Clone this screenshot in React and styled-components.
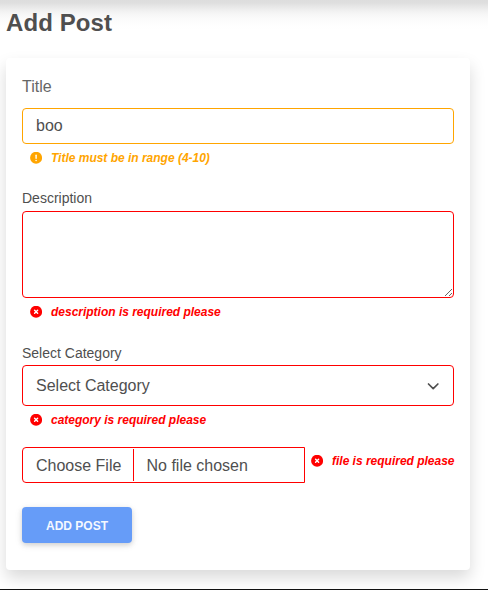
import React from "react";
import styled, { createGlobalStyle } from "styled-components";

const GlobalStyle = createGlobalStyle`
  *, *::before, *::after { box-sizing: border-box; }
  body {
    margin: 0;
    background: #fff;
    color: #4f4f4f;
    font-family: "Liberation Sans", Arial, sans-serif;
    font-size: 16px;
    line-height: 1.6;
    overflow: hidden;
  }
`;

const Page = styled.div`
  height: 590px;
  padding: 0 18px 0 6px;
  border-bottom: 1px solid #111;
  background: linear-gradient(
    #dddddd 0, #dfdfdf 3px, #e6e6e6 6px, #efefef 10px,
    #f6f6f6 14px, #fbfbfb 19px, #fefefe 25px, #fff 30px
  );
  overflow: hidden;
`;

const Heading = styled.h1`
  margin: 0;
  height: 58px;
  padding-top: 8px;
  font-size: 24px;
  font-weight: 700;
  line-height: 29px;
  letter-spacing: 0.1px;
`;

const Card = styled.form`
  height: 512px;
  padding: 16px;
  border-radius: 4px;
  background: #fff;
  box-shadow: 0 8px 16px rgba(0, 0, 0, 0.15);
`;

const Field = styled.div`
  display: flex;
  flex-direction: column;
  height: ${({ $height }) => $height}px;
`;

const Label = styled.label`
  flex: none;
  height: ${({ $height }) => $height}px;
  font-size: ${({ $large }) => ($large ? 16 : 14)}px;
  line-height: ${({ $line }) => $line}px;
  color: ${({ $large }) => ($large ? "#666" : "#4f4f4f")};
`;

const TextInput = styled.input`
  display: block;
  width: 100%;
  height: 36px;
  padding: 0 13px;
  border: 1px solid orange;
  border-radius: 4px;
  outline: 0;
  color: #4f4f4f;
  font: 16px "Liberation Sans", Arial, sans-serif;
`;

const TextArea = styled.textarea`
  display: block;
  width: 100%;
  height: 87px;
  padding: 5px 12px;
  border: 1px solid #f00;
  border-radius: 4px;
  outline: 0;
  color: #4f4f4f;
  font: 16px "Liberation Sans", Arial, sans-serif;
`;

const SelectBox = styled.div`
  display: flex;
  align-items: center;
  justify-content: space-between;
  flex: none;
  height: 41px;
  padding: 0 12px 0 13px;
  border: 1px solid #f00;
  border-radius: 4px;
`;

const Message = styled.div`
  display: flex;
  align-items: center;
  flex: none;
  gap: 9px;
  height: 16px;
  margin: ${({ $inline }) => ($inline ? "6px 0 0 6px" : "6px 0 0 8px")};
  color: ${({ $color }) => $color};
  font-size: 12px;
  font-weight: 700;
  font-style: italic;
  line-height: 16px;
  letter-spacing: -0.01px;
  white-space: nowrap;
`;

const StatusIcon = styled.svg`
  flex: none;
  width: 12px;
  height: 12px;
`;

const FileRow = styled.div`
  display: flex;
  height: 60px;
`;

const FilePicker = styled.div`
  display: flex;
  align-items: center;
  flex: none;
  width: 283px;
  height: 36px;
  border: 1px solid #f00;
  border-radius: 4px 0 0 4px;
`;

const FileButton = styled.span`
  width: 111px;
  height: 32px;
  padding-left: 13px;
  border-right: 1px solid #f00;
  line-height: 33px;
`;

const FileName = styled.span`
  padding-left: 12.5px;
  line-height: 33px;
`;

const SubmitButton = styled.button`
  display: block;
  width: 110px;
  height: 36px;
  padding: 1px 0 0;
  border: 0;
  border-radius: 4px;
  background: #669cf8;
  color: #f4f8ff;
  font: 700 12px "Liberation Sans", Arial, sans-serif;
  box-shadow: 0 2px 5px 0 rgba(0, 0, 0, 0.14), 0 2px 10px 0 rgba(0, 0, 0, 0.07);
`;

function WarningMessage({ children }) {
  return (
    <Message $color="orange">
      <StatusIcon viewBox="0 0 12 12">
        <circle cx="6.1" cy="5.8" r="6" fill="currentColor" />
        <path d="M6.1 3.2v3.1" stroke="#fff" strokeWidth="1.4" strokeLinecap="round" />
        <circle cx="6.1" cy="8.5" r="0.8" fill="#fff" />
      </StatusIcon>
      <span>{children}</span>
    </Message>
  );
}

function ErrorMessage({ children, inline }) {
  return (
    <Message $color="#f00" $inline={inline}>
      <StatusIcon viewBox="0 0 12 12">
        <circle cx="6.1" cy="5.8" r="6" fill="currentColor" />
        <path d="m4.6 4.3 3 3m0-3-3 3" stroke="#fff" strokeWidth="1.45" strokeLinecap="round" />
      </StatusIcon>
      <span>{children}</span>
    </Message>
  );
}

export default function App() {
  return (
    <>
      <GlobalStyle />
      <Page>
        <Heading>Add Post</Heading>
        <Card>
          <Field $height={113}>
            <Label $height={34} $line={26} $large htmlFor="title">Title</Label>
            <TextInput id="title" defaultValue="boo" />
            <WarningMessage>Title must be in range (4-10)</WarningMessage>
          </Field>
          <Field $height={154}>
            <Label $height={24} $line={22} htmlFor="description">Description</Label>
            <TextArea id="description" />
            <ErrorMessage>description is required please</ErrorMessage>
          </Field>
          <Field $height={106}>
            <Label $height={24} $line={24}>Select Category</Label>
            <SelectBox>
              <span>Select Category</span>
              <svg width="16" height="12" viewBox="0 0 16 12" fill="none" stroke="#4f4f4f" strokeWidth="1.7" strokeLinecap="round" strokeLinejoin="round">
                <path d="m3.5 4 4.7 4.6L12.9 4" />
              </svg>
            </SelectBox>
            <ErrorMessage>category is required please</ErrorMessage>
          </Field>
          <FileRow>
            <FilePicker>
              <FileButton>Choose File</FileButton>
              <FileName>No file chosen</FileName>
            </FilePicker>
            <ErrorMessage inline>file is required please</ErrorMessage>
          </FileRow>
          <SubmitButton type="button">ADD POST</SubmitButton>
        </Card>
      </Page>
    </>
  );
}
